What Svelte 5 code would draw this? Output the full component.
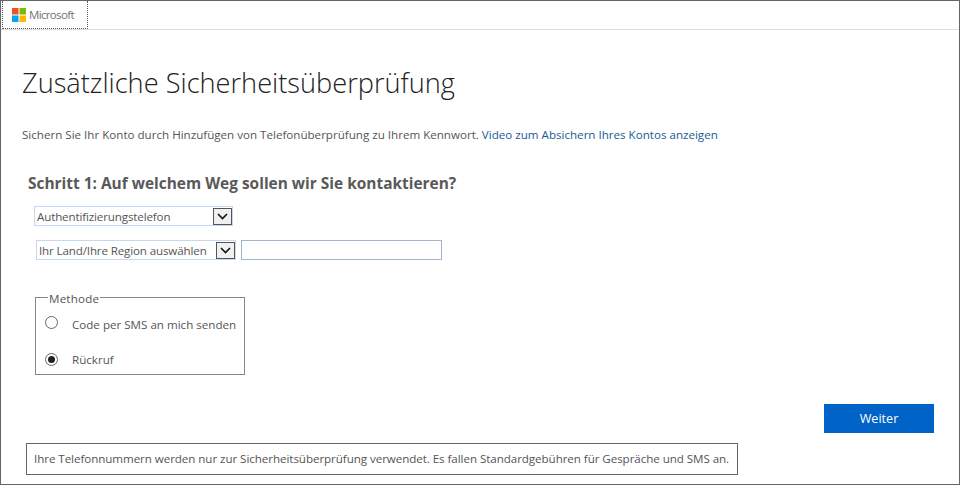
<script>
	let country = "Ihr Land/Ihre Region auswählen";
</script>

<div class="frame">
	<header class="top">
		<div class="logo">
			<svg width="14" height="14" viewBox="0 0 14 14">
				<rect x="0" y="0" width="6.5" height="6.5" fill="#f25022" />
				<rect x="7.5" y="0" width="6.5" height="6.5" fill="#7fba00" />
				<rect x="0" y="7.5" width="6.5" height="6.5" fill="#00a4ef" />
				<rect x="7.5" y="7.5" width="6.5" height="6.5" fill="#ffb900" />
			</svg>
			<span>Microsoft</span>
		</div>
	</header>

	<main class="content">
		<h1>Zusätzliche Sicherheitsüberprüfung</h1>
		<p class="intro">
			Sichern Sie Ihr Konto durch Hinzufügen von Telefonüberprüfung zu Ihrem Kennwort.
			<span class="link">Video zum Absichern Ihres Kontos anzeigen</span>
		</p>

		<h2>Schritt 1: Auf welchem Weg sollen wir Sie kontaktieren?</h2>

		<div class="select first">
			<span class="value">Authentifizierungstelefon</span>
			<span class="arrow">
				<svg width="11" height="7" viewBox="0 0 11 7"><path d="M1 1l4.5 4.5L10 1" fill="none" stroke="#111" stroke-width="1.6" /></svg>
			</span>
		</div>

		<div class="phone-row">
			<div class="select second">
				<span class="value">{country}</span>
				<span class="arrow">
					<svg width="11" height="7" viewBox="0 0 11 7"><path d="M1 1l4.5 4.5L10 1" fill="none" stroke="#111" stroke-width="1.6" /></svg>
				</span>
			</div>
			<div class="phone"></div>
		</div>

		<fieldset>
			<legend>Methode</legend>
			<div class="option">
				<span class="radio"></span>
				<span class="label">Code per SMS an mich senden</span>
			</div>
			<div class="option two">
				<span class="radio on"></span>
				<span class="label">Rückruf</span>
			</div>
		</fieldset>

		<div class="actions">
			<div class="next">Weiter</div>
		</div>

		<div class="notice">Ihre Telefonnummern werden nur zur Sicherheitsüberprüfung verwendet. Es fallen Standardgebühren für Gespräche und SMS an.</div>
	</main>
</div>

<style>
	:global(body) {
		margin: 0;
		background: #fff;
	}
	.frame {
		box-sizing: border-box;
		width: 960px;
		height: 485px;
		border: 1px solid #666;
		font-family: "Open Sans", "Noto Sans", sans-serif;
		font-size: 11.6px;
		color: #555;
		overflow: hidden;
	}
	.top {
		height: 28px;
		border-bottom: 1px solid #ddd;
	}
	.logo {
		box-sizing: border-box;
		width: 86px;
		height: 28px;
		margin-left: 1px;
		padding-left: 9px;
		display: flex;
		align-items: center;
		gap: 3px;
		border: 1px dotted #555;
		border-top: none;
		font-size: 11.5px;
		letter-spacing: -0.65px;
		color: #737373;
	}
	.content {
		padding-left: 21px;
	}
	h1 {
		margin: 35px 0 0;
		font-size: 27.2px;
		line-height: 36px;
		font-weight: 300;
		color: #222;
	}
	.intro {
		margin: 26px 0 0;
		line-height: 16px;
		color: #555;
	}
	.link {
		color: #1a5a96;
	}
	h2 {
		margin: 30px 0 0 6px;
		font-size: 15.45px;
		line-height: 20px;
		font-weight: 700;
		color: #595959;
	}
	.select {
		box-sizing: border-box;
		display: flex;
		align-items: center;
		justify-content: space-between;
		height: 20px;
		border: 1px solid #c5d9ee;
		color: #555;
		letter-spacing: -0.14px;
	}
	.first {
		width: 199px;
		margin: 13px 0 0 12px;
		padding-left: 2px;
	}
	.second {
		width: 200px;
		padding-left: 2px;
	}
	.arrow {
		box-sizing: border-box;
		width: 19px;
		height: 17px;
		display: flex;
		align-items: center;
		justify-content: center;
		background: #f0f0f0;
		border: 1px solid #555;
	}
	.phone-row {
		display: flex;
		gap: 5px;
		margin: 14px 0 0 14px;
	}
	.phone {
		box-sizing: border-box;
		width: 201px;
		height: 20px;
		border: 1px solid #a3b5cb;
	}
	fieldset {
		box-sizing: border-box;
		width: 210px;
		height: 87px;
		margin: 28px 0 0 13px;
		padding: 0 0 0 9px;
		border: 1px solid #888;
	}
	legend {
		padding: 4px 1px 0;
		margin-left: 3px;
		line-height: 14px;
		letter-spacing: 0.2px;
	}
	.option {
		display: flex;
		align-items: flex-start;
		gap: 14px;
		height: 20px;
		margin-top: 10px;
	}
	.radio {
		box-sizing: border-box;
		flex: none;
		width: 13px;
		height: 13px;
		border: 1px solid #666;
		border-radius: 50%;
		background: #fff;
		position: relative;
	}
	.label {
		margin-top: 1px;
		line-height: 16px;
	}
	.two {
		margin-top: 17px;
	}
	.two .label {
		margin-top: -1px;
	}
	.radio.on::after {
		content: "";
		position: absolute;
		left: 2px;
		top: 2px;
		width: 7px;
		height: 7px;
		border-radius: 50%;
		background: #222;
	}
	.actions {
		display: flex;
		justify-content: flex-end;
		margin: 29px 25px 0 0;
	}
	.next {
		width: 110px;
		height: 29px;
		background: #0063c7;
		color: #fff;
		font-size: 12.6px;
		line-height: 30px;
		text-align: center;
	}
	.notice {
		box-sizing: border-box;
		width: 712px;
		height: 32px;
		margin: 10px 0 0 4px;
		padding-left: 7px;
		border: 1px solid #666;
		line-height: 30px;
		white-space: nowrap;
		letter-spacing: -0.06px;
	}
</style>
